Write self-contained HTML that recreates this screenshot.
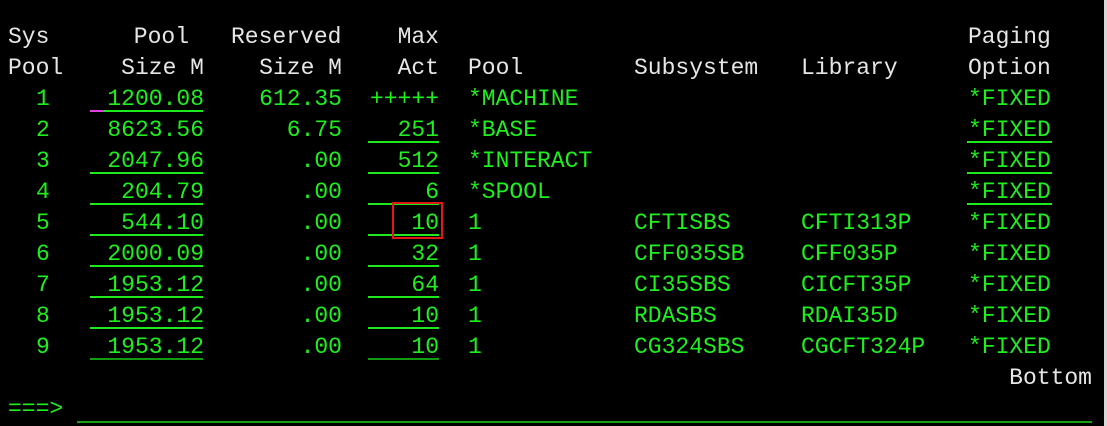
<!DOCTYPE html>
<html><head><meta charset="utf-8"><style>
html,body{margin:0;padding:0;background:#000;width:1107px;height:426px;overflow:hidden;position:relative}
.t{position:absolute;font-family:"Liberation Mono",monospace;font-size:23px;line-height:23px;white-space:pre;color:#1ef01e}
.w{color:#e6e6e6}
.r{text-align:right}
.u{position:absolute;height:2px;background:#1ee81e}
</style></head><body>
<div id="c"></div>
<script>
var c=document.getElementById('c'),h='';
function T(x,row,s,cls,right){var y=26+31*row;
 if(right) h+='<div class="t r '+(cls||'')+'" style="right:'+(1107-x)+'px;top:'+y+'px">'+s+'</div>';
 else h+='<div class="t '+(cls||'')+'" style="left:'+x+'px;top:'+y+'px">'+s+'</div>';}
function U(x1,x2,y,col){h+='<div class="u" style="left:'+x1+'px;width:'+(x2-x1)+'px;top:'+y+'px'+(col?';background:'+col:'')+'"></div>';}
T(8,0,'Sys','w');T(189,0,'Pool','w',1);T(231,0,'Reserved','w');T(439,0,'Max','w',1);T(968,0,'Paging','w');
T(8,1,'Pool','w');T(204,1,'Size M','w',1);T(342,1,'Size M','w',1);T(439,1,'Act','w',1);T(468,1,'Pool','w');T(634,1,'Subsystem','w');T(801,1,'Library','w');T(968,1,'Option','w');
var d=[['1','1200.08','612.35','+++++','*MACHINE','',''],['2','8623.56','6.75','251','*BASE','',''],['3','2047.96','.00','512','*INTERACT','',''],['4','204.79','.00','6','*SPOOL','',''],['5','544.10','.00','10','1','CFTISBS','CFTI313P'],['6','2000.09','.00','32','1','CFF035SB','CFF035P'],['7','1953.12','.00','64','1','CI35SBS','CICFT35P'],['8','1953.12','.00','10','1','RDASBS','RDAI35D'],['9','1953.12','.00','10','1','CG324SBS','CGCFT324P']];
for(var i=0;i<9;i++){var r=i+2,e=d[i];
 T(36,r,e[0]);T(204,r,e[1],'',1);T(342,r,e[2],'',1);T(439,r,e[3],'',1);T(468,r,e[4]);T(634,r,e[5]);T(801,r,e[6]);T(968,r,'*FIXED');
 var y=110+31*i;
 if(i!=1) U(i==0?104:90,203,y,i==8?'#139a13':null);
 if(i>0) U(368,439,y,i==8?'#139a13':null);
 if(i>=1&&i<=3) U(967,1052,y);
}
h+='<div class="u" style="left:90px;width:14px;top:110px;background:#e040e0"></div>';
T(1092,11,'Bottom','w',1);
T(8,12,'===&gt;');
U(77,1092,421,'#13a013');
h+='<div style="position:absolute;left:392px;top:202px;width:47px;height:33px;border:2px solid #e01818"></div>';
h+='<div style="position:absolute;left:1104px;top:0;width:3px;height:426px;background:#d8d8d8"></div>';
c.innerHTML=h;
</script>
</body></html>
